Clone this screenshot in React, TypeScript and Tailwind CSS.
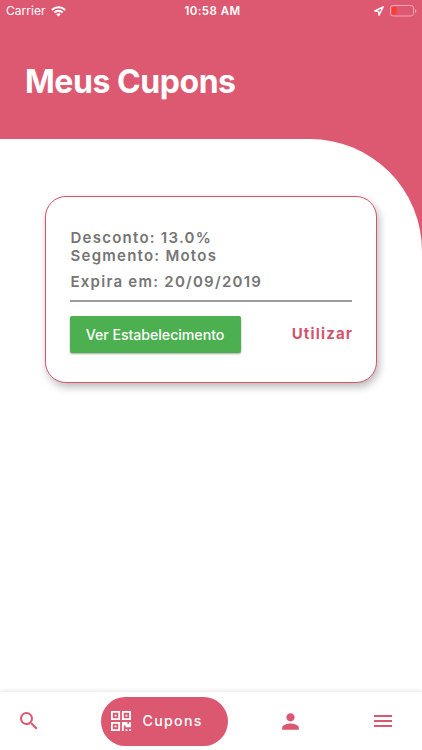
import type { ReactNode } from "react";
import { MdMenu, MdPerson, MdSearch } from "react-icons/md";

function StatusBar() {
  return (
    <div className="grid h-[22px] grid-cols-3 items-center pl-[6px] pr-[5px] text-[12px] leading-none">
      <div className="flex items-center gap-[5px]">
        <span className="tracking-[0.05px]">Carrier</span>
        <svg className="h-[11px] w-[15px]" viewBox="0 0 15 11" fill="none" stroke="currentColor" strokeWidth="2.1">
          <path d="M.9 4a9.3 9.3 0 0 1 13.2 0" />
          <path d="M3.4 6.6a5.8 5.8 0 0 1 8.2 0" />
          <path d="M7.5 10.6 5.2 8.3a3.3 3.3 0 0 1 4.6 0z" fill="currentColor" stroke="none" />
        </svg>
      </div>
      <span className="whitespace-nowrap pl-[2px] pt-px text-center text-[11.5px] font-semibold tracking-[0.45px]">10:58 AM</span>
      <div className="flex items-center justify-end gap-[6px]">
        <svg className="h-[10px] w-[10px]" viewBox="0 0 10 10" fill="none" stroke="currentColor" strokeWidth="1.4" strokeLinejoin="round">
          <path d="M9.2.8.8 5l3.8.4.4 3.8z" />
        </svg>
        <svg className="h-[12px] w-[27px]" viewBox="0 0 27 12">
          <rect x="0.5" y="0.5" width="23" height="10.5" rx="2.5" fill="none" stroke="#f0a3b1" />
          <rect x="2" y="2" width="4.5" height="7.5" rx="1" fill="#ff3b30" />
          <path d="M25 4v4q1.4-.6 1.4-2T25 4z" fill="#f0a3b1" />
        </svg>
      </div>
    </div>
  );
}

function QrIcon() {
  return (
    <svg className="h-[20px] w-[20px]" viewBox="0 0 11 11" fill="currentColor" fillRule="evenodd">
      <path d="M0 0h5v5H0zM1 1v3h3V1zM2 2h1v1H2z" />
      <path d="M6 0h5v5H6zM7 1v3h3V1zM8 2h1v1H8z" />
      <path d="M0 6h5v5H0zM1 7v3h3V7zM2 8h1v1H2z" />
      <path d="M6 6h3v1h1V6h1v3H8V8H7v3H6zM8 10h1v1H8zM10 10h1v1h-1z" />
    </svg>
  );
}

function CouponCard() {
  return (
    <article className="mx-[45px] h-[187px] rounded-[21px] border border-[#d4546c] bg-white px-[24px] pt-[32px] shadow-[2px_4px_9px_rgba(0,0,0,0.28)]">
      <div className="pl-[0.5px] text-[15px] font-semibold leading-[18px] tracking-[1.25px] text-[#757575]">
        <p>Desconto: 13.0%</p>
        <p>Segmento: Motos</p>
        <p className="mt-[8px]">Expira em: 20/09/2019</p>
      </div>
      <div className="mt-[9px] h-[2px] bg-[#9b9b9b]" />
      <div className="mt-[14px] flex items-center justify-between">
        <button className="-ml-[0.5px] h-[37px] w-[171px] whitespace-nowrap rounded-[2px] bg-[#4caf50] text-[14.2px] font-medium tracking-[-0.05px] text-white shadow-[0_1px_2px_rgba(0,0,0,0.35)]">
          Ver Estabelecimento
        </button>
        <button className="-mr-[1px] text-[15px] font-bold tracking-[1.15px] text-[#d4546c]">Utilizar</button>
      </div>
    </article>
  );
}

function NavItem({ label, children }: { label: string; children: ReactNode }) {
  return (
    <button aria-label={label} className="flex h-[48px] w-[48px] items-center justify-center text-[#dc5870]">
      {children}
    </button>
  );
}

function BottomNav() {
  return (
    <nav className="flex h-[58px] items-center pl-[5px] shadow-[0_-1px_4px_rgba(0,0,0,0.1)]">
      <NavItem label="Buscar">
        <MdSearch size={24} />
      </NavItem>
      <button className="ml-[48px] flex h-[49px] w-[127px] items-center rounded-full bg-[#dc5870] pb-px pl-[10px] text-white">
        <QrIcon />
        <span className="ml-[11.5px] text-[14.2px] font-medium tracking-[1.3px]">Cupons</span>
      </button>
      <div className="ml-[38px]">
        <NavItem label="Perfil">
          <MdPerson size={25} />
        </NavItem>
      </div>
      <div className="ml-[45px]">
        <NavItem label="Menu">
          <MdMenu size={24} />
        </NavItem>
      </div>
    </nav>
  );
}

export default function App() {
  return (
    <div className="flex h-[750px] w-[422px] flex-col overflow-hidden bg-white font-['Inter','Liberation_Sans',sans-serif]">
      <header className="h-[139px] shrink-0 bg-[#dd5971] text-white">
        <StatusBar />
        <h1 className="mt-[40px] pl-[25px] text-[32px] font-bold leading-[40px] tracking-[-0.45px]">Meus Cupons</h1>
      </header>
      <main className="flex-1 bg-linear-to-b from-[#dd5971] from-[115px] to-white to-[115px]">
        <div className="h-full rounded-tr-[112px] bg-white pt-[57px]">
          <CouponCard />
        </div>
      </main>
      <BottomNav />
    </div>
  );
}
